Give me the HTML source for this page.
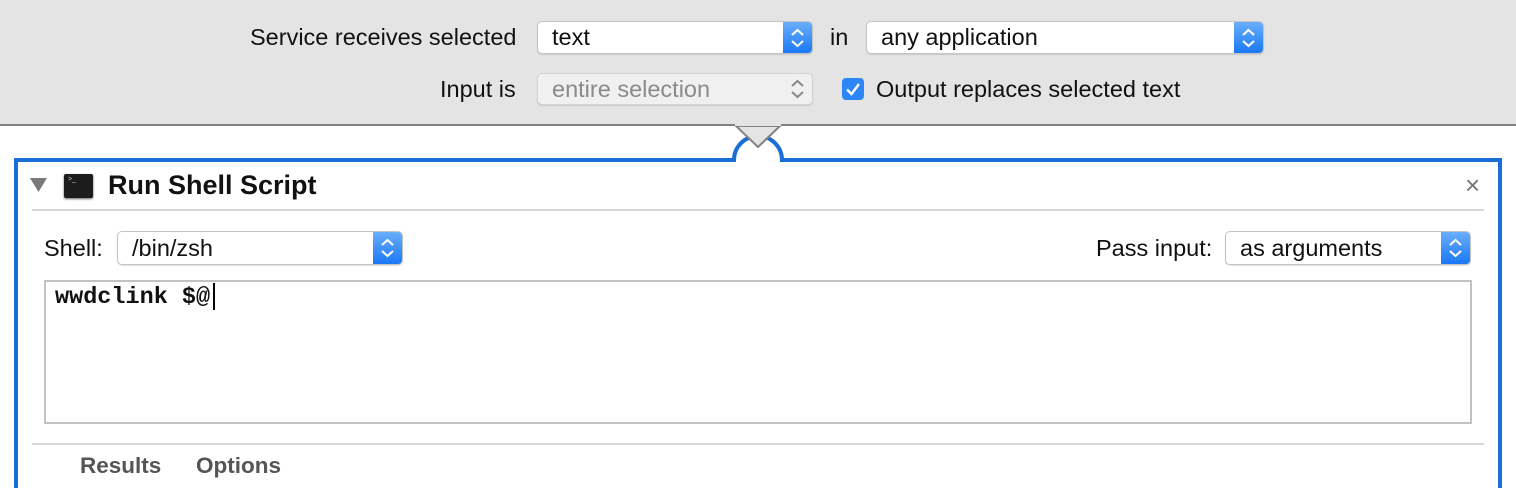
<!DOCTYPE html>
<html><head><style>
*{margin:0;padding:0;box-sizing:border-box}
body{width:1516px;height:474px;overflow:hidden;background:#fff;font-family:"Liberation Sans",Arial,sans-serif;position:relative;color:#111}
.a{position:absolute}
.hdr{left:0;top:0;width:1516px;height:126px;background:#e4e4e4;border-bottom:2px solid #828282}
.lbl{font-size:23.5px;white-space:nowrap}
.pop{position:absolute;background:#fff;border:1px solid #c4c4c4;border-radius:5px;box-shadow:0 1px 1px rgba(0,0,0,.12);font-size:23.5px;padding-left:14px;overflow:hidden;white-space:nowrap}
.pop .btn{position:absolute;right:0;top:0;bottom:0;width:29px;background:linear-gradient(#6aaefb,#1a78f5);}
.pop svg{position:absolute;left:6px;top:50%;margin-top:-10px}
</style></head><body>
<div class="a hdr"></div>
<div class="a lbl" style="left:250px;top:24px">Service receives selected</div>
<div class="pop" style="left:537px;top:21px;width:276px;height:33px;line-height:31px">text<div class="btn"><svg width="17" height="20" viewBox="0 0 17 20"><path d="M3 7 L8.5 2 L14 7 M3 13 L8.5 18 L14 13" stroke="#fff" stroke-width="2" fill="none"/></svg></div></div>
<div class="a lbl" style="left:830px;top:24px">in</div>
<div class="pop" style="left:866px;top:21px;width:398px;height:33px;line-height:31px">any application<div class="btn"><svg width="17" height="20" viewBox="0 0 17 20"><path d="M3 7 L8.5 2 L14 7 M3 13 L8.5 18 L14 13" stroke="#fff" stroke-width="2" fill="none"/></svg></div></div>
<div class="a lbl" style="left:440px;top:76px">Input is</div>
<div class="pop" style="left:537px;top:73px;width:276px;height:32px;line-height:31px;background:#f0f0f0;color:#8a8a8a;border-color:#d2d2d2">entire selection<div class="btn" style="background:none"><svg width="17" height="20" viewBox="0 0 17 20"><path d="M3 7 L8.5 2 L14 7 M3 13 L8.5 18 L14 13" stroke="#888" stroke-width="2" fill="none"/></svg></div></div>
<div class="a" style="left:842px;top:78px;width:22px;height:22px;border-radius:4px;background:#2d86f5"><svg width="22" height="22" viewBox="0 0 22 22"><path d="M5 11.5 L9.5 16 L17 6" stroke="#fff" stroke-width="2.4" fill="none"/></svg></div>
<div class="a lbl" style="left:876px;top:76px">Output replaces selected text</div>

<!-- blue frame -->
<div class="a" style="left:14px;top:158px;width:1488px;height:330px;border:4px solid #1a6fd6;border-bottom:none"></div>
<svg class="a" style="left:720px;top:120px" width="80" height="44" viewBox="0 0 80 44"><path d="M14 40 A24 24 0 0 1 62 40" stroke="#1a6fd6" stroke-width="4" fill="#fff"/><rect x="16" y="40" width="44" height="4" fill="#fff"/><path d="M16 6 L38 27 L60 6 Z" fill="#e4e4e4" stroke="#828282" stroke-width="2"/><rect x="15" y="0" width="46" height="6" fill="#e4e4e4"/></svg>

<svg class="a" style="left:30px;top:178px" width="18" height="15"><path d="M0 0 H17 L8.5 14 Z" fill="#7a7a7a"/></svg>
<div class="a" style="left:64px;top:174px;width:29px;height:24px;background:#1c1c1c;border-radius:2px;box-shadow:0 1px 2px #666"><span style="color:#ccc;font-size:7px;position:absolute;left:4px;top:2px">&gt;_</span></div>
<div class="a" style="left:108px;top:170px;font-size:27px;font-weight:bold;white-space:nowrap">Run Shell Script</div>
<div class="a" style="left:1465px;top:170px;font-size:26px;color:#777">×</div>
<div class="a" style="left:32px;top:209px;width:1452px;height:2px;background:#d6d6d6"></div>

<div class="a lbl" style="left:44px;top:235px">Shell:</div>
<div class="pop" style="left:117px;top:231px;width:286px;height:34px;line-height:33px">/bin/zsh<div class="btn"><svg width="17" height="20" viewBox="0 0 17 20"><path d="M3 7 L8.5 2 L14 7 M3 13 L8.5 18 L14 13" stroke="#fff" stroke-width="2" fill="none"/></svg></div></div>
<div class="a lbl" style="left:1096px;top:235px">Pass input:</div>
<div class="pop" style="left:1225px;top:231px;width:246px;height:34px;line-height:33px">as arguments<div class="btn"><svg width="17" height="20" viewBox="0 0 17 20"><path d="M3 7 L8.5 2 L14 7 M3 13 L8.5 18 L14 13" stroke="#fff" stroke-width="2" fill="none"/></svg></div></div>

<div class="a" style="left:44px;top:280px;width:1428px;height:144px;border:2px solid #c2c2c2"></div>
<div class="a" style="left:55px;top:284px;font-family:'Liberation Mono',monospace;font-size:23.5px;font-weight:bold;white-space:nowrap">wwdclink $@</div>
<div class="a" style="left:213px;top:283px;width:2px;height:27px;background:#000"></div>

<div class="a" style="left:32px;top:443px;width:1452px;height:2px;background:#d6d6d6"></div>
<div class="a" style="left:80px;top:453px;font-size:22.5px;font-weight:bold;color:#555">Results</div>
<div class="a" style="left:196px;top:453px;font-size:22.5px;font-weight:bold;color:#555">Options</div>
</body></html>
